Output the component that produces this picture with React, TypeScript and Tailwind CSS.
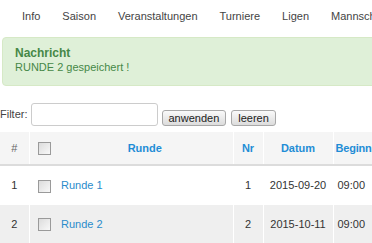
import React from "react";

const navItems = ["Info", "Saison", "Veranstaltungen", "Turniere", "Ligen", "Mannschaften"];

const rows = [
  { id: 1, name: "Runde 1", nr: 1, datum: "2015-09-20", beginn: "09:00" },
  { id: 2, name: "Runde 2", nr: 2, datum: "2015-10-11", beginn: "09:00" },
];

function Checkbox() {
  return (
    <span className="inline-block h-[13px] w-[13px] border border-[#9a9a9a] bg-gradient-to-br from-[#dcdcdc] to-[#f8f8f8] align-middle" />
  );
}

export default function App() {
  return (
    <div className="h-[243px] w-[372px] overflow-hidden bg-white font-['Liberation_Sans',Arial,sans-serif] text-[11px] text-[#333]">
      {/* top nav */}
      <div className="flex h-[33px] items-center whitespace-nowrap pl-[22px] text-[#444]">
        {navItems.map((item) => (
          <span key={item} className="mr-[22px]">
            {item}
          </span>
        ))}
      </div>

      {/* message */}
      <div className="ml-[2px] mt-[4px] h-[49px] w-[400px] rounded-[4px] border border-[#d6e9c6] bg-[#dff0d8] px-[12px] pt-[8px] text-[#468847]">
        <div className="text-[12px] font-bold leading-[14px]">Nachricht</div>
        <div className="leading-[14px]">RUNDE 2 gespeichert !</div>
      </div>

      {/* filter */}
      <div className="mt-[17px] flex items-center whitespace-nowrap">
        <span className="mr-[3px] text-[#444]">Filter:</span>
        <div className="h-[23px] w-[127px] rounded-[3px] border border-[#ccc] bg-white" />
        <button className="ml-[4px] mt-[7px] h-[16px] rounded-[3px] border border-[#a8a8a8] bg-gradient-to-b from-[#fafafa] to-[#dcdcdc] px-[6px] text-[11px] leading-[13px] text-[#222]">
          anwenden
        </button>
        <button className="ml-[5px] mt-[7px] h-[16px] rounded-[3px] border border-[#a8a8a8] bg-gradient-to-b from-[#fafafa] to-[#dcdcdc] px-[6px] text-[11px] leading-[13px] text-[#222]">
          leeren
        </button>
      </div>

      {/* table */}
      <table className="mt-[6px] w-[420px] table-fixed border-collapse">
        <colgroup>
          <col className="w-[29px]" />
          <col className="w-[28px]" />
          <col className="w-[176px]" />
          <col className="w-[30px]" />
          <col className="w-[70px]" />
          <col className="w-[87px]" />
        </colgroup>
        <thead>
          <tr className="h-[33px] border-b-2 border-[#dcdcdc] bg-[#f5f5f5] text-[#1f8dd6]">
            <th className="border-r border-white text-center font-normal text-[#666]">#</th>
            <th className="pl-[8px] text-left">
              <Checkbox />
            </th>
            <th className="border-r border-white text-center font-bold">Runde</th>
            <th className="border-r border-white text-center font-bold">Nr</th>
            <th className="border-r border-white text-center font-bold">Datum</th>
            <th className="pl-[2px] text-left font-bold tracking-[-0.2px]">Beginn</th>
          </tr>
        </thead>
        <tbody>
          {rows.map((r, i) => (
            <tr key={r.id} className={i % 2 === 1 ? "h-[38px] bg-[#efefef]" : "h-[40px] bg-white"}>
              <td className="border-r border-white text-center">{r.id}</td>
              <td className="pl-[8px]">
                <Checkbox />
              </td>
              <td className="border-r border-white pl-[4px] text-[#2a8ccb]">{r.name}</td>
              <td className="border-r border-white text-center">{r.nr}</td>
              <td className="border-r border-white text-center">{r.datum}</td>
              <td className="pl-[4px]">{r.beginn}</td>
            </tr>
          ))}
        </tbody>
      </table>
    </div>
  );
}
